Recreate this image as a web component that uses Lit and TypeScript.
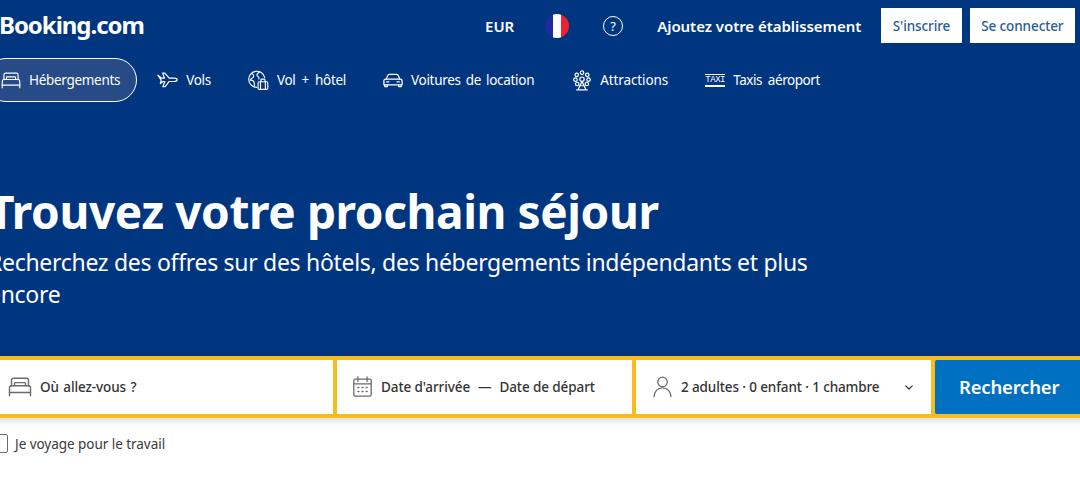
import { LitElement, html, css, svg } from "lit";
import { customElement } from "lit/decorators.js";

const ic = (w: number, h: number, vb: string, body: unknown) => html`<svg class="ic" width=${w} height=${h} viewBox=${vb} fill="none" stroke="currentColor" stroke-width="1.4" stroke-linecap="round" stroke-linejoin="round">${body}</svg>`;

const bed = (w = 24, h = 20) => ic(w, h, "0 0 24 20", svg`<path d="M3.500 9V3.200C3.500 2 4.400 1.200 5.500 1.200h13c1.100 0 2 .8 2 2V9"/><path d="M6.500 8.600V6.600c0-.6.4-1 1-1h9c.6 0 1 .4 1 1v2"/><path d="M3.500 8.800h17c1.200 0 2 1 2 2V15.500H1.500v-4.700c0-1.100.8-2 2-2z"/><path d="M1.500 15.500v3.300M22.500 15.500v3.300"/>`);
const plane = ic(21, 16, "0 0 24 18", svg`<path d="M1 3.500l4 3.300h3.500L6.500 1.200h2.400l5 5.600h5.600c1.800 0 3.500 1 3.500 2 0 1.100-1.700 1.900-3.500 1.900h-5.600l-4.600 6h-2.600l2.200-6H6.800L3.800 13l1-3.800L1 3.500z"/>`);
const globeCase = ic(21, 21, "0 0 26 26", svg`<path d="M11 21.500a10 10 0 1 1 9.600-12.400"/><path d="M5 4.500c2 1 2.500 3 1.500 4.500S3 10.500 3 12.500c1.500 0 4 .5 4.500 2.500.3 1.500.2 3 .8 5"/><path d="M14 2.500c-1.500 1.500-3 2-3 3.500s2 2 2.500 3.500c.2.600 0 1 0 1.500"/><rect x="12.500" y="14.500" width="12" height="9.500" rx="1.500"/><path d="M16 14.500v-2.200c0-.6.4-1 1-1h3c.6 0 1 .4 1 1v2.200M15.500 14.500V24M21.500 14.500V24"/>`);
const car = ic(20, 15, "0 0 22 16", svg`<path d="M3.500 6.500l1.700-4c.3-.8 1-1.300 1.800-1.300h8c.8 0 1.500.5 1.800 1.300l1.700 4"/><path d="M3 6.500h16c1.100 0 2 .9 2 2v4.200H1V8.500c0-1.100.9-2 2-2z"/><path d="M2 12.700v2h2.800v-2M17.200 12.700v2H20v-2M4 9.500h2.500M15.500 9.500H18"/>`);
const wheel = ic(20, 21, "0 0 20 24", svg`<circle cx="10" cy="10.500" r="2.500"/><circle cx="10" cy="3" r="2"/><circle cx="4" cy="5.500" r="2"/><circle cx="16" cy="5.500" r="2"/><circle cx="2.500" cy="11" r="2"/><circle cx="17.500" cy="11" r="2"/><circle cx="4.500" cy="16" r="2"/><circle cx="15.500" cy="16" r="2"/><path d="M10 13l-4.500 9.500M10 13l4.500 9.500M4 22.800h12M7.500 18h5"/>`);
const taxi = html`<span class="taxi">TAXI</span>`;
const calendar = ic(21, 22, "0 0 22 24", svg`<rect x="1.500" y="3.500" width="19" height="18.500" rx="1.500"/><path d="M1.500 8.500h19M6 1v5M16 1v5"/><path d="M6 12.500h1M10.500 12.500h1M15 12.500h1M6 17h1M10.500 17h1M15 17h1" stroke-width="1.600"/>`);
const person = ic(21, 22, "0 0 22 24", svg`<circle cx="11" cy="6.500" r="5.200"/><path d="M1.800 22.500c0-5.500 4-9.500 9.200-9.500s9.200 4 9.200 9.500"/>`);
const chevron = ic(8, 5, "0 0 10 6", svg`<path d="M1 1l4 4 4-4"/>`);

@customElement("app-root")
export class AppRoot extends LitElement {
  static styles = css`
    :host {
      display: block;
      width: 1080px;
      height: 479px;
      overflow: hidden;
      background: #fff;
      font-family: "Noto Sans", "Open Sans", sans-serif;
      color: #262626;
    }
    .ic { flex: none; display: block; }
    .top { background: #003580; color: #fff; height: 356px; }
    .header {
      display: flex;
      align-items: center;
      height: 35px;
      padding: 8px 5px 0 0;
    }
    .logo {
      font-size: 24px;
      font-weight: 700;
      letter-spacing: -1.05px;
      margin: 0 auto 3px -1px;
    }
    .hitem { font-size: 15px; font-weight: 600; letter-spacing: -0.05px; }
    .eur { margin-right: 31px; }
    .flag {
      width: 24px;
      height: 24px;
      border-radius: 50%;
      background: linear-gradient(90deg, #1d2c9c 0 33%, #fff 33% 66%, #ec2230 66%);
      margin-right: 34px;
    }
    .help {
      width: 20px;
      height: 20px;
      box-sizing: border-box;
      border: 1.300px solid #fff;
      border-radius: 50%;
      display: flex;
      align-items: center;
      justify-content: center;
      font-size: 13px;
      margin-right: 34px;
    }
    .add { margin-right: 20px; }
    .btn {
      height: 35px;
      box-sizing: border-box;
      background: #fff;
      color: #2c5c94;
      display: flex;
      align-items: center;
      padding: 0 11.500px;
      font-size: 13.500px;
      font-weight: 500;
      letter-spacing: -0.1px;
    }
    .btn + .btn { margin-left: 8px; }
    .nav {
      display: flex;
      gap: 5px;
      margin: 15px 0 0 -16px;
      font-size: 13.500px;
      letter-spacing: -0.3px;
      word-spacing: 2.800px;
    }
    .tab {
      display: flex;
      align-items: center;
      gap: 8px;
      height: 44px;
      box-sizing: border-box;
      padding: 0 16px;
      white-space: nowrap;
    }
    .tab.on {
      border: 1px solid #fff;
      border-radius: 22px;
      background: #264b87;
      margin-right: -1px;
    }
    .tab.t3 { word-spacing: 1.800px; }
    .tab.t4 { letter-spacing: -0.1px; margin-left: 1px; }
    .tab.t5 { letter-spacing: -0.45px; }
    .taxi {
      display: block;
      width: 20px;
      box-sizing: border-box;
      font-family: "Liberation Mono", monospace;
      font-size: 9px;
      letter-spacing: -0.5px;
      line-height: 10px;
      text-align: center;
      border-top: 1px solid #fff;
      border-bottom: 2px solid #fff;
    }
    .hero { margin: 76px 0 0 -12px; }
    h1 {
      margin: 0 0 2px;
      font-size: 46px;
      line-height: 66px;
      font-weight: 700;
      letter-spacing: -0.4px;
      white-space: nowrap;
    }
    .sub {
      margin: 0;
      font-size: 23px;
      line-height: 32px;
      width: 830px;
      letter-spacing: -0.3px;
    }
    .search {
      display: flex;
      gap: 4px;
      background: #f8bc1f;
      padding: 4px 0;
      height: 62px;
      box-sizing: border-box;
      margin-left: -12px;
      width: 1100px;
      box-shadow: 0 2px 8px rgba(0, 0, 0, 0.16);
      font-size: 13.500px;
      font-weight: 500;
      letter-spacing: -0.1px;
    }
    .cell {
      background: #fff;
      display: flex;
      align-items: center;
      color: #333;
    }
    .c1 { width: 345px; padding-left: 20px; gap: 8px; box-sizing: border-box; word-spacing: 1px; }
    .c2 { width: 295px; padding-left: 15px; gap: 7px; box-sizing: border-box; }
    .c2 .ic { margin-right: 1px; }
    .c3 { width: 295px; padding-left: 16px; gap: 8px; box-sizing: border-box; letter-spacing: -0.12px; }
    .cell .ic { color: #6b6b6b; }
    .dash { margin: 0 1px; }
    .chev { margin-left: 18px; }
    .cell .chev .ic { color: #262626; }
    .go {
      background: #0071c2;
      color: #fff;
      flex: 1;
      border-radius: 2px;
      font-size: 18.500px;
      font-weight: 600;
      letter-spacing: -0.2px;
      display: flex;
      align-items: center;
      padding: 0 0 2px 24px;
    }
    .biz {
      display: flex;
      align-items: center;
      gap: 7px;
      margin: 16px 0 0 -12px;
      font-size: 13.500px;
      letter-spacing: -0.04px;
      color: #3a3a3a;
    }
    .box {
      width: 20px;
      height: 19px;
      box-sizing: border-box;
      border: 1px solid #6b6b6b;
      border-radius: 2px;
      background: #fff;
    }
  `;

  render() {
    const tabs: [string, unknown, boolean][] = [
      ["Hébergements", bed(20, 17), true],
      ["Vols", plane, false],
      ["Vol + hôtel", globeCase, false],
      ["Voitures de location", car, false],
      ["Attractions", wheel, false],
      ["Taxis aéroport", taxi, false],
    ];
    return html`
      <div class="top">
        <div class="header">
          <div class="logo">Booking.com</div>
          <span class="hitem eur">EUR</span>
          <span class="flag"></span>
          <span class="help">?</span>
          <span class="hitem add">Ajoutez votre établissement</span>
          <span class="btn">S'inscrire</span>
          <span class="btn">Se connecter</span>
        </div>
        <div class="nav">
          ${tabs.map(([t, i, on], n) => html`<div class="tab t${n} ${on ? "on" : ""}">${i}<span>${t}</span></div>`)}
        </div>
        <div class="hero">
          <h1>Trouvez votre prochain séjour</h1>
          <p class="sub">Recherchez des offres sur des hôtels, des hébergements indépendants et plus encore</p>
        </div>
      </div>
      <div class="search">
        <div class="cell c1">${bed(24, 20)}<span>Où allez-vous ?</span></div>
        <div class="cell c2">${calendar}<span>Date d'arrivée</span><span class="dash">—</span><span>Date de départ</span></div>
        <div class="cell c3">${person}<span>2 adultes · 0 enfant · 1 chambre</span><span class="chev">${chevron}</span></div>
        <div class="go">Rechercher</div>
      </div>
      <div class="biz"><span class="box"></span><span>Je voyage pour le travail</span></div>
    `;
  }
}
